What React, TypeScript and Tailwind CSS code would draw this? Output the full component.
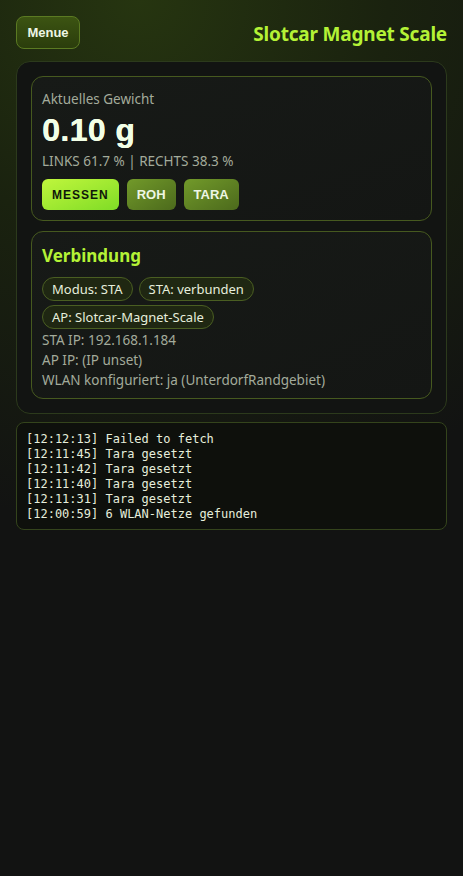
import React from "react";

const chips = ["Modus: STA", "STA: verbunden", "AP: Slotcar-Magnet-Scale"];

const logLines = [
  "[12:12:13] Failed to fetch",
  "[12:11:45] Tara gesetzt",
  "[12:11:42] Tara gesetzt",
  "[12:11:40] Tara gesetzt",
  "[12:11:31] Tara gesetzt",
  "[12:00:59] 6 WLAN-Netze gefunden",
];

const sans = "font-['Noto_Sans','Open_Sans',sans-serif]";

export default function App() {
  return (
    <div
      className={`min-h-[876px] w-full bg-[radial-gradient(ellipse_120%_60%_at_30%_0%,#263510_0%,#1a220f_45%,#121312_100%)] px-4 pt-4 pb-6 ${sans}`}
    >
      <header className="flex items-center justify-between h-[33px]">
        <button className="h-[33px] w-[64px] rounded-lg border border-[#5b7a22] bg-gradient-to-b from-[#3c5412] to-[#2b3d0c] text-[13px] font-bold text-[#eef6e6] font-['Liberation_Sans',sans-serif]">
          Menue
        </button>
        <h1 className="text-[19px] font-bold text-[#b4f236] tracking-[-0.2px] pt-1">
          Slotcar Magnet Scale
        </h1>
      </header>

      <main className="mt-[12px] rounded-[14px] border border-[#2c3a1c] bg-[#121412] p-[14px] flex flex-col gap-[10px]">
        <section className="rounded-xl border border-[#46591f] bg-gradient-to-br from-[#171a17] to-[#141614] px-[10px] pt-[12px] pb-[10px]">
          <div className="text-[13.5px] text-[#a3ab9b] leading-5">Aktuelles Gewicht</div>
          <div className="mt-[3px] text-[32px] font-bold leading-[36px] text-[#f2ffe6] font-['Liberation_Sans',sans-serif] tracking-[0.4px] [text-shadow:0.4px_0_0_#f2ffe6]">
            0.10 g
          </div>
          <div className="mt-[3px] text-[13.5px] text-[#a3ab9b] leading-5">
            LINKS 61.7 % | RECHTS 38.3 %
          </div>
          <div className="mt-[8px] flex gap-2 font-['Liberation_Sans',sans-serif]">
            <button className="h-[31px] px-[10px] rounded-md bg-gradient-to-br from-[#bff63c] to-[#7fdc26] text-[12px] font-bold tracking-[1px] text-[#10180a]">
              MESSEN
            </button>
            <button className="h-[31px] px-[10px] rounded-md bg-gradient-to-br from-[#729a2a] to-[#4c6a1c] text-[13px] font-bold text-[#eef6e4]">
              ROH
            </button>
            <button className="h-[31px] px-[10px] rounded-md bg-gradient-to-br from-[#729a2a] to-[#4c6a1c] text-[13px] font-bold text-[#eef6e4]">
              TARA
            </button>
          </div>
        </section>

        <section className="rounded-xl border border-[#46591f] bg-gradient-to-br from-[#171a17] to-[#141614] px-[10px] pt-[12px] pb-[8px]">
          <h2 className="text-[17px] font-bold text-[#b4f236] leading-6">Verbindung</h2>
          <div className="mt-[9px] flex flex-wrap gap-x-[6px] gap-y-[4px] max-w-[230px]">
            {chips.map((chip) => (
              <span
                key={chip}
                className="h-[24px] px-[9px] rounded-full border border-[#4a5e22] bg-[#1f2712] text-[13px] leading-[22px] text-[#e6eedc]"
              >
                {chip}
              </span>
            ))}
          </div>
          <div className="mt-[1px] text-[13.5px] leading-[20px] text-[#a3ab9b]">
            <div>STA IP: 192.168.1.184</div>
            <div>AP IP: (IP unset)</div>
            <div>WLAN konfiguriert: ja (UnterdorfRandgebiet)</div>
          </div>
        </section>
      </main>

      <div className="mt-[8px] rounded-lg border border-[#34441c] bg-[#0e100c] px-[9px] pt-[9px] pb-[7px] font-['DejaVu_Sans_Mono',monospace] text-[12px] leading-[15px] text-[#e6eedc] whitespace-pre">
        {logLines.map((line, i) => (
          <div key={i}>{line}</div>
        ))}
      </div>
    </div>
  );
}
